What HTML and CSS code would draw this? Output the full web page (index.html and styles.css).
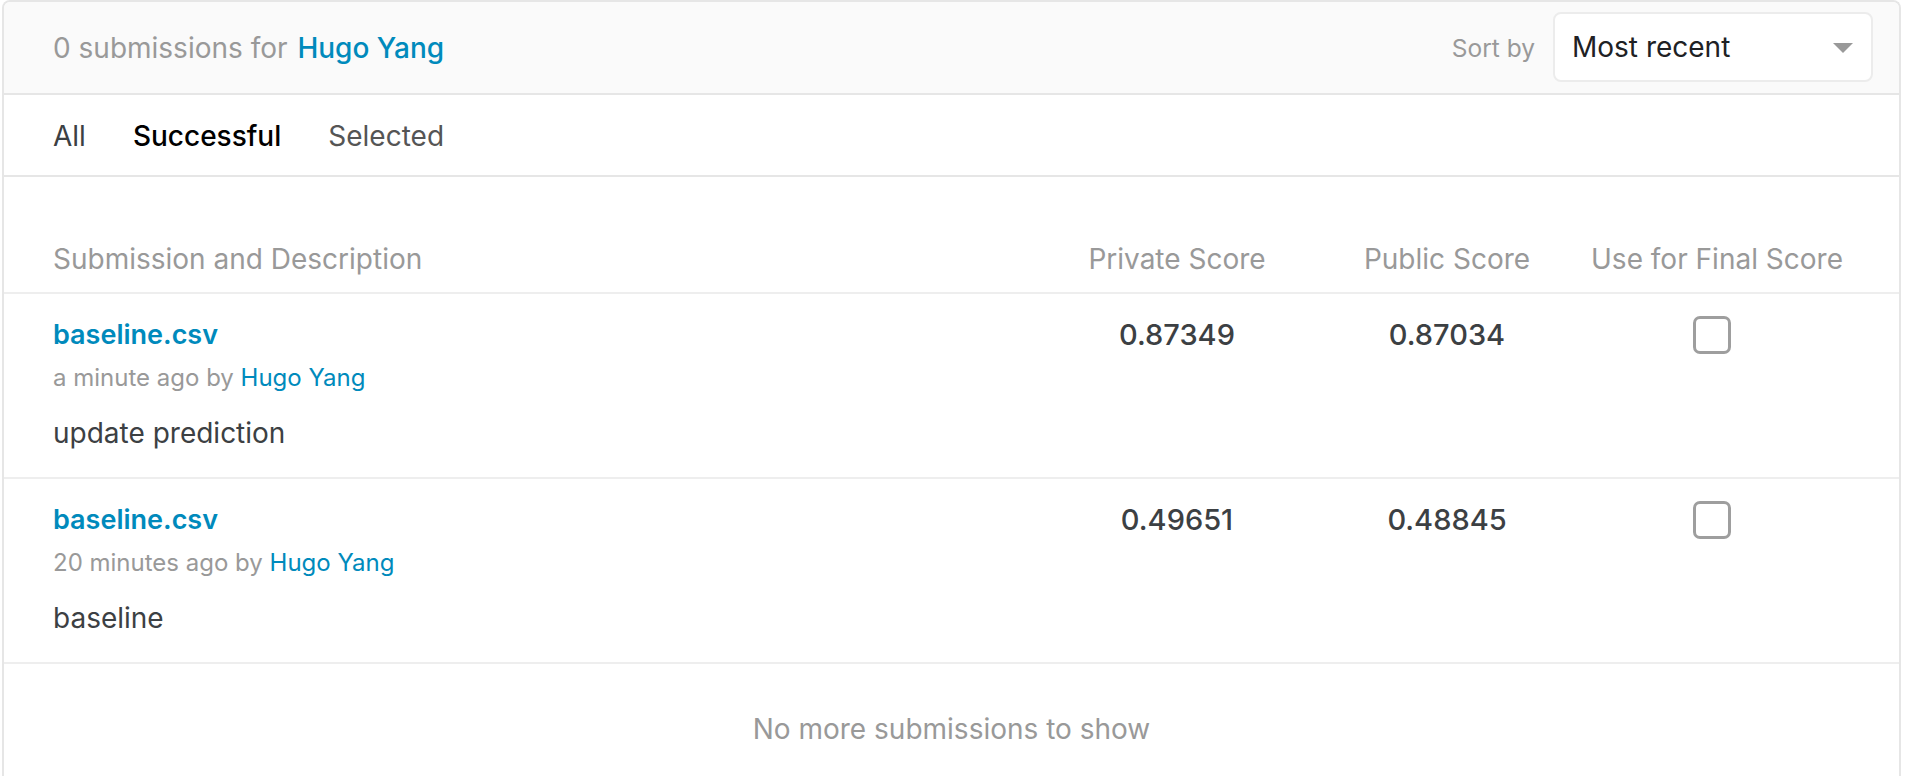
FILE: index.html
```html
<!DOCTYPE html>
<html lang="en">
<head>
<meta charset="utf-8">
<title>Submissions</title>
<link rel="stylesheet" href="styles.css">
</head>
<body>
<div class="panel">
  <div class="panel-head">
    <div class="count">0 submissions for <a class="link strong" href="#">Hugo Yang</a></div>
    <div class="sort">
      <span class="sort-label">Sort by</span>
      <div class="select">
        <span>Most recent</span>
        <svg class="caret" width="20" height="10" viewBox="0 0 20 10"><path d="M0 0h20L10 10z" fill="#999"/></svg>
      </div>
    </div>
  </div>
  <div class="tabs">
    <span class="tab">All</span>
    <span class="tab active">Successful</span>
    <span class="tab muted">Selected</span>
  </div>
  <div class="table">
    <div class="row thead">
      <div class="c-desc">Submission and Description</div>
      <div class="c-num">Private Score</div>
      <div class="c-num">Public Score</div>
      <div class="c-num">Use for Final Score</div>
    </div>
    <div class="row item">
      <div class="c-desc">
        <a class="file" href="#">baseline.csv</a>
        <div class="meta">a minute ago by <a class="link" href="#">Hugo Yang</a></div>
        <div class="desc">update prediction</div>
      </div>
      <div class="c-num score">0.87349</div>
      <div class="c-num score">0.87034</div>
      <div class="c-num"><span class="check"></span></div>
    </div>
    <div class="row item">
      <div class="c-desc">
        <a class="file" href="#">baseline.csv</a>
        <div class="meta">20 minutes ago by <a class="link" href="#">Hugo Yang</a></div>
        <div class="desc">baseline</div>
      </div>
      <div class="c-num score">0.49651</div>
      <div class="c-num score">0.48845</div>
      <div class="c-num"><span class="check"></span></div>
    </div>
    <div class="end">No more submissions to show</div>
  </div>
</div>
</body>
</html>
```
FILE: styles.css
```css
* { box-sizing: border-box; }
html, body { margin: 0; background: #fff; }
body {
  font-family: Inter, "Noto Sans", sans-serif;
  font-size: 28px;
  color: #3c4043;
  overflow: hidden;
}
a { text-decoration: none; }
.link { color: #008abc; }
.strong { font-weight: 500; margin-left: 2px; }

.panel {
  margin-left: 2px;
  width: 1899px;
  border: 2px solid #e6e6e6;
  border-bottom: none;
  border-radius: 8px 8px 0 0;
  min-height: 800px;
}

.panel-head {
  height: 93px;
  background: #fafafa;
  border-radius: 6px 6px 0 0;
  border-bottom: 2px solid #e6e6e6;
  display: flex;
  align-items: center;
  justify-content: space-between;
  padding: 0 26px 0 49px;
}
.count { color: #999; line-height: 36px; }
.sort { display: flex; align-items: center; gap: 18px; }
.sort-label { color: #999; font-size: 24.5px; }
.select {
  width: 320px;
  height: 70px;
  margin-top: -2px;
  background: #fff;
  border: 2px solid #ececec;
  border-radius: 8px;
  display: flex;
  align-items: center;
  justify-content: space-between;
  padding: 0 18px 0 17px;
  color: #202124;
}
.caret { display: block; margin-top: 2px; }

.tabs {
  height: 82px;
  padding-top: 2px;
  display: flex;
  align-items: center;
  gap: 47px;
  padding-left: 49px;
  border-bottom: 2px solid #e6e6e6;
  color: #3c4043;
}
.tab.active { color: #000; font-weight: 500; }
.tab.muted { color: #555; }

.row {
  display: grid;
  grid-template-columns: 1fr 270px 270px 270px;
  padding: 0 47px 0 49px;
  border-bottom: 2px solid #eeeeee;
}
.thead {
  padding-top: 64px;
  padding-bottom: 15px;
  line-height: 36px;
  color: #999;
}
.c-num { text-align: center; }
.item { padding-top: 23px; padding-bottom: 26px; }
.file {
  display: block;
  color: #008abc;
  font-weight: 600;
  font-size: 27px;
  line-height: 36px;
}
.meta {
  margin-top: 9px;
  font-size: 24px;
  line-height: 32px;
  color: #999;
}
.desc { margin-top: 21px; line-height: 36px; }
.score {
  font-weight: 500;
  font-size: 29px;
  line-height: 36px;
  color: #3c4043;
}
.check {
  display: inline-block;
  width: 38px;
  height: 38px;
  border: 3px solid #9e9e9e;
  border-radius: 7px;
  margin-top: -1px;
  margin-right: 10px;
  vertical-align: top;
}
.end {
  padding-top: 47px;
  text-align: center;
  color: #999;
  line-height: 36px;
}
```
